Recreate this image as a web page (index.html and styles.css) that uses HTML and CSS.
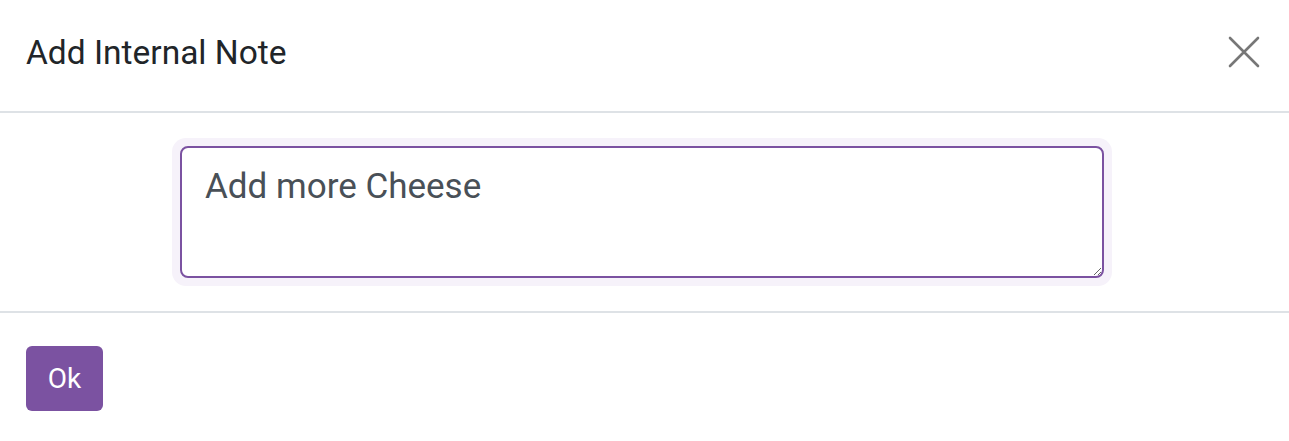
FILE: index.html
```html
<!DOCTYPE html>
<html lang="en">
<head>
    <meta charset="UTF-8">
    <meta name="viewport" content="width=device-width, initial-scale=1.0">
    <title>Add Internal Note</title>
    <link rel="stylesheet" href="styles.css">
</head>
<body>
    <div class="modal">
        <div class="modal-header">
            <h2 class="modal-title">Add Internal Note</h2>
            <button class="close" aria-label="Close">
                <svg width="32" height="32" viewBox="0 0 32 32">
                    <path d="M2 2 L30 30 M30 2 L2 30" stroke="#777" stroke-width="2.6" stroke-linecap="round" fill="none"/>
                </svg>
            </button>
        </div>
        <div class="modal-body">
            <div class="note-wrap">
                <textarea class="note" id="note" autofocus>Add more Cheese</textarea>
            </div>
        </div>
        <div class="modal-footer">
            <button class="btn-ok">Ok</button>
        </div>
    </div>
    <script>
        const note = document.getElementById('note');
        note.focus();
        note.setSelectionRange(note.value.length, note.value.length);
    </script>
</body>
</html>
```

FILE: styles.css
```css
body {
    margin: 0;
    font-family: Roboto, "Liberation Sans", sans-serif;
    background: #fff;
    color: #212529;
}
.modal {
    width: 1289px;
    height: 441px;
}
.modal-header {
    display: flex;
    align-items: center;
    justify-content: space-between;
    height: 113px;
    padding: 0 29px 0 26px;
    border-bottom: 2px solid #dee2e6;
    box-sizing: border-box;
}
.modal-title {
    margin: 0;
    font-size: 33.5px;
    font-weight: 400;
    margin-top: -7px;
}
.close {
    background: none;
    border: none;
    padding: 0;
    width: 32px;
    height: 32px;
    margin-top: -8px;
    cursor: pointer;
}
.modal-body {
    height: 200px;
    display: flex;
    justify-content: center;
    align-items: flex-start;
    padding: 25px 5px 0 0;
    box-sizing: border-box;
    border-bottom: 2px solid #dee2e6;
}
.note-wrap {
    padding: 8px;
    background: #f6f2fa;
    border-radius: 14px;
}
.note {
    display: block;
    width: 924px;
    height: 132px;
    box-sizing: border-box;
    border: 2px solid #7b52a1;
    border-radius: 8px;
    padding: 18px 23px;
    font-family: Roboto, "Liberation Sans", sans-serif;
    font-size: 35px;
    color: #495057;
    caret-color: #333;
    outline: none;
    background: #fff;
}
.modal-footer {
    padding: 33px 26px;
}
.btn-ok {
    background: #7b52a1;
    color: #fff;
    border: none;
    border-radius: 6px;
    width: 77px;
    height: 65px;
    font-family: Roboto, "Liberation Sans", sans-serif;
    font-size: 28px;
    cursor: pointer;
}
```
